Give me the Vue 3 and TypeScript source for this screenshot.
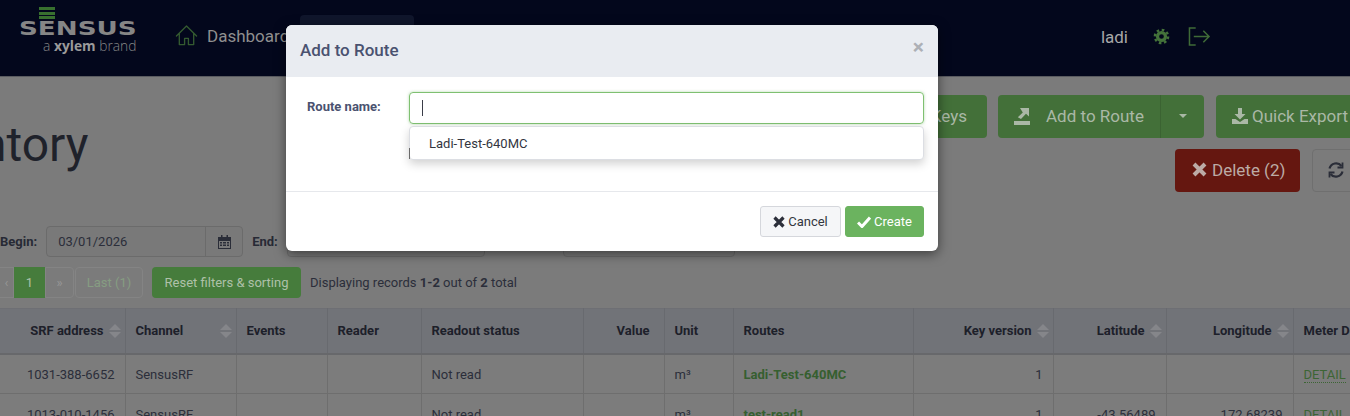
<script setup lang="ts">
interface Col { label: string; width: number; align?: 'right'; sort?: boolean }
const cols: Col[] = [
  { label: 'SRF address', width: 125, align: 'right', sort: true },
  { label: 'Channel', width: 111, sort: true },
  { label: 'Events', width: 91 },
  { label: 'Reader', width: 94 },
  { label: 'Readout status', width: 162 },
  { label: 'Value', width: 81, align: 'right' },
  { label: 'Unit', width: 69 },
  { label: 'Routes', width: 180 },
  { label: 'Key version', width: 140, align: 'right', sort: true },
  { label: 'Latitude', width: 113, align: 'right', sort: true },
  { label: 'Longitude', width: 127, align: 'right', sort: true },
  { label: 'Meter Details', width: 107 },
]
const rows = [
  ['1031-388-6652', 'SensusRF', '', '', 'Not read', '', 'm³', 'Ladi-Test-640MC', '1', '', '', 'DETAIL'],
  ['1013-010-1456', 'SensusRF', '', '', 'Not read', '', 'm³', 'test-read1', '1', '-43.56489', '172.68239', 'DETAIL'],
]
const nav = ['Dashboard', 'Inventory', 'Routes', 'Reports']
</script>

<template>
  <div class="page">
    <header class="topbar">
      <div class="logo">
        <span class="stripes"><i></i><i></i><i></i></span>
        <span class="wordmark">SENSUS</span>
        <span class="tag">a <b>xylem</b> brand</span>
      </div>
      <nav class="nav">
        <a v-for="(n, i) in nav" :key="n" class="nav-item" :class="{ active: i === 1 }">
          <svg width="23" height="23" viewBox="0 0 24 24" fill="none" stroke="#345a30" stroke-width="1.4" stroke-linejoin="round" stroke-linecap="round">
            <path d="M1.5 12.5 12 2l10.500 10.500M4.500 10v11.500h5.500v-6.500h4v6.500h5.500V10" />
          </svg>
          <span>{{ n }}</span>
        </a>
      </nav>
      <div class="user">
        <span class="uname">ladi</span>
        <svg class="gear" width="17" height="17" viewBox="0 0 18 18" fill="none" stroke="#44723a">
          <circle cx="9" cy="9" r="4.200" stroke-width="3.400" />
          <circle cx="9" cy="9" r="7" stroke-width="2.600" stroke-dasharray="2.750 2.750" />
        </svg>
        <svg class="logout" width="23" height="21" viewBox="0 0 24 22" fill="none" stroke="#3f6b37" stroke-width="1.600">
          <path d="M8 2H1.500v18H8M6 11h16M16 5l6 6-6 6" />
        </svg>
      </div>
    </header>

    <main class="content">
      <div class="head-row">
        <h1 class="title">Inventory</h1>
        <div class="actions">
          <div class="action-row">
            <button class="btn big green keys">Keys</button>
            <div class="split">
              <button class="btn big green main">
                <svg width="16" height="18" viewBox="0 0 16 18" fill="#aab8a6">
                  <path d="M0 14h16v4H0zM6 1h9v8.500l-3-2.800-5 5.300-3.200-1.700 5-4.800z" />
                </svg>
                <span>Add to Route</span>
              </button>
              <button class="btn big green caret"><i></i></button>
            </div>
            <button class="btn big green quick">
              <svg width="16" height="16" viewBox="0 0 16 16" fill="#aab8a6">
                <path d="M6 0h4v6h3.500L8 11.500 2.500 6H6zM0 11h3.500L8 14l4.500-3H16v5H0z" />
              </svg>
              <span>Quick Export</span>
            </button>
          </div>
          <div class="action-row">
            <button class="btn big red">
              <svg width="15" height="15" viewBox="0 0 15 15" fill="none" stroke="#bcaba6" stroke-width="4">
                <path d="M2 2l11 11M13 2 2 13" />
              </svg>
              <span>Delete (2)</span>
            </button>
            <button class="btn big ghost">
              <svg width="18" height="18" viewBox="0 0 18 18" fill="none" stroke="#2a2d38" stroke-width="2.200">
                <path d="M2.500 7.500A6.800 6.800 0 0 1 14.500 5M15.500 10.500A6.800 6.800 0 0 1 3.500 13" />
                <path d="M15.500 1.500v5h-5M2.500 16.500v-5h5" stroke-width="1.800" />
              </svg>
            </button>
          </div>
        </div>
      </div>

      <div class="filters">
        <label>Begin:</label>
        <div class="date w197">
          <span class="val">03/01/2026</span>
          <span class="addon">
            <svg width="13" height="14" viewBox="0 0 13 14" fill="#2a2d38">
              <path d="M0 2h3V0h1.500v2h4V0H10v2h3v12H0zm1 4v7h11V6z" />
              <path d="M2 7h2v1.500H2zM5 7h3v1.500H5zM9 7h2v1.500H9zM2 9.500h2V11H2zM5 9.500h3V11H5zM9 9.500h2V11H9z" />
            </svg>
          </span>
        </div>
        <label class="end">End:</label>
        <div class="date w198"></div>
        <div class="date w172"></div>
      </div>

      <div class="pager-row">
        <ul class="pager">
          <li class="prev">‹</li>
          <li class="on">1</li>
          <li class="next">»</li>
          <li class="last">Last (1)</li>
        </ul>
        <button class="btn reset">Reset filters &amp; sorting</button>
        <span class="count">Displaying records <b>1-2</b> out of <b>2</b> total</span>
      </div>

      <table class="grid">
        <colgroup>
          <col v-for="c in cols" :key="c.label" :style="{ width: c.width + 'px' }" />
        </colgroup>
        <thead>
          <tr>
            <th v-for="c in cols" :key="c.label">
              <div class="th" :class="{ right: c.align === 'right', plain: c.align === 'right' && !c.sort }">
                <span>{{ c.label }}</span>
                <span v-if="c.sort" class="sort"><i></i><i></i></span>
              </div>
            </th>
          </tr>
        </thead>
        <tbody>
          <tr v-for="r in rows" :key="r[0]">
            <td v-for="(v, i) in r" :key="i" :class="{ right: cols[i].align === 'right', route: i === 7 }">
              <span v-if="i === 11" class="detail">{{ v }}</span>
              <template v-else>{{ v }}</template>
            </td>
          </tr>
        </tbody>
      </table>
    </main>

    <div class="modal">
      <div class="m-head">
        <h2>Add to Route</h2>
        <span class="close">×</span>
      </div>
      <div class="m-body">
        <label>Route name:</label>
        <div class="combo">
          <div class="input"><span class="cursor"></span></div>
          <div class="menu">Ladi-Test-640MC</div>
          <div class="hidden-row"></div>
        </div>
      </div>
      <div class="m-foot">
        <button class="mbtn cancel">
          <svg width="12" height="12" viewBox="0 0 12 12" fill="none" stroke="#2c2f3a" stroke-width="3.200">
            <path d="M1.500 1.500l9 9M10.500 1.500l-9 9" />
          </svg>
          Cancel
        </button>
        <button class="mbtn create">
          <svg width="14" height="12" viewBox="0 0 14 12" fill="none" stroke="#fff" stroke-width="3">
            <path d="M1 6.500 5 10.500 13 1.500" />
          </svg>
          Create
        </button>
      </div>
    </div>
  </div>
</template>

<style scoped>
.page {
  position: relative;
  width: 1350px;
  height: 416px;
  overflow: hidden;
  background: #7b7b7b;
  font-family: Roboto, "Liberation Sans", sans-serif;
  font-size: 13px;
  color: #2b2e3a;
}
.topbar {
  display: flex;
  align-items: center;
  height: 76px;
  background: #03071c;
  border-bottom: 1px solid #5a5b60;
  box-sizing: content-box;
}
.logo {
  position: relative;
  width: 175px;
  height: 76px;
  flex: none;
  color: #868686;
}
.stripes {
  position: absolute;
  left: 39px;
  top: 7px;
  display: flex;
  flex-direction: column;
  gap: 1.500px;
  width: 16px;
}
.stripes i {
  height: 3px;
  background: #38702f;
}
.wordmark {
  position: absolute;
  left: 19px;
  top: 15px;
  font-family: "DejaVu Sans", sans-serif;
  font-weight: 700;
  font-size: 20px;
  line-height: 26px;
  transform-origin: left center;
  transform: scaleX(1.31);
}
.tag {
  position: absolute;
  left: 43px;
  top: 37px;
  font-family: "Open Sans", sans-serif;
  font-size: 13.800px;
  font-weight: 300;
  line-height: 18px;
  white-space: nowrap;
}
.tag b {
  color: #9a9a9a;
  font-weight: 700;
}
.nav {
  display: flex;
  align-items: center;
  gap: 9px;
  height: 76px;
  padding-bottom: 5px;
  box-sizing: border-box;
  white-space: nowrap;
}
.nav-item {
  display: flex;
  align-items: center;
  gap: 9px;
  height: 42px;
  font-size: 17px;
  color: #8f8f8f;
}
.nav-item:first-child {
  margin-right: 2px;
}
.nav-item:nth-child(3) {
  margin-right: 12px;
}
.nav-item.active {
  background: #10162c;
  border-radius: 4px;
  padding: 0 6px;
}
.user {
  margin-left: auto;
  display: flex;
  align-items: center;
  padding: 0 139px 3px 0;
}
.uname {
  font-size: 17px;
  color: #a8a8a8;
  margin-right: 25px;
}
.gear {
  margin-right: 18px;
}
.head-row {
  display: flex;
  justify-content: space-between;
  padding-top: 18px;
  height: 97px;
  box-sizing: content-box;
}
.title {
  margin: 26px 0 0 -108px;
  font-size: 48px;
  font-weight: 400;
  line-height: 48px;
  color: #1f222b;
}
.actions {
  display: flex;
  flex-direction: column;
  gap: 11px;
  margin-right: -10px;
}
.action-row {
  display: flex;
  justify-content: flex-end;
  gap: 12px;
}
.btn {
  font-family: inherit;
  border: 0;
  padding: 0;
  display: flex;
  align-items: center;
}
.big {
  height: 43px;
  font-size: 17px;
  border-radius: 4px;
  padding-bottom: 2px;
}
.green {
  background: #437039;
  color: #aab8a6;
}
.keys {
  width: 207px;
  justify-content: flex-end;
  padding-right: 20px;
  margin-right: -1px;
}
.split {
  display: flex;
}
.main {
  width: 163px;
  gap: 16px;
  padding-left: 16px;
  border-radius: 4px 0 0 4px;
  border-right: 1px solid #3b6332;
}
.caret {
  width: 43px;
  justify-content: center;
  border-radius: 0 4px 4px 0;
}
.caret i {
  border: 4px solid transparent;
  border-top-color: #aab8a6;
  border-bottom: 0;
}
.quick {
  width: 144px;
  gap: 4px;
  padding-left: 16px;
}
.red {
  width: 125px;
  gap: 5px;
  padding-left: 17px;
  background: #651710;
  color: #bcaba6;
}
.ghost {
  width: 48px;
  justify-content: center;
  background: #7b7b7b;
  border: 1px solid #6f6f6f;
  box-sizing: border-box;
}
.filters {
  display: flex;
  align-items: center;
  height: 31px;
  margin-top: 34px;
}
.filters label {
  font-weight: 700;
  color: #272a35;
}
.date {
  box-sizing: border-box;
  height: 31px;
  display: flex;
  align-items: center;
  border: 1px solid #6b6b6b;
  border-radius: 4px;
  background: #797979;
}
.w197 {
  width: 197px;
  margin-left: 9px;
}
.w198 {
  width: 198px;
  margin-left: 9px;
}
.w172 {
  width: 172px;
  margin-left: 78px;
}
.val {
  flex: 1;
  padding-left: 11px;
  color: #2b2e3a;
}
.addon {
  width: 36px;
  height: 100%;
  display: flex;
  align-items: center;
  justify-content: center;
  border-left: 1px solid #6b6b6b;
}
.end {
  margin-left: 9px;
}
.pager-row {
  display: flex;
  align-items: center;
  height: 31px;
  margin-top: 10px;
}
.pager {
  display: flex;
  list-style: none;
  margin: 0;
  padding: 0;
  height: 31px;
  line-height: 29px;
  color: #869d82;
}
.pager li {
  box-sizing: border-box;
  border: 1px solid #848484;
  text-align: center;
}
.prev {
  width: 14px;
  border-left: 0 !important;
  color: #969696;
}
.pager .on {
  width: 31px;
  background: #467c3c;
  border-color: #467c3c;
  color: #aec1a9;
}
.next {
  width: 29px;
  border-radius: 0 4px 4px 0;
  color: #969696;
}
.last {
  width: 68px;
  margin-left: 1px;
  border-radius: 4px;
}
.reset {
  width: 149px;
  height: 31px;
  margin-left: 9px;
  justify-content: center;
  border-radius: 4px;
  background: #467c3c;
  color: #aec1a9;
  font-size: 13px;
}
.count {
  margin-left: 9px;
  color: #2b2e3a;
}
.count b {
  font-weight: 700;
}
.grid {
  table-layout: fixed;
  width: 1400px;
  margin-top: 10px;
  border-collapse: collapse;
}
th {
  height: 45px;
  padding: 0 4px 0 10px;
  box-sizing: border-box;
  background: #717378;
  border-right: 1px solid #686a6f;
  border-top: 1px solid #6e6f74;
  border-bottom: 2px solid #67686b;
  font-weight: 700;
  color: #1d202a;
  text-align: left;
  white-space: nowrap;
}
.th {
  display: flex;
  align-items: center;
  justify-content: space-between;
  gap: 5px;
}
.th.right {
  justify-content: flex-end;
}
.th.plain {
  padding-right: 10px;
}
.sort {
  display: flex;
  flex-direction: column;
  gap: 2px;
  flex: none;
}
.sort i {
  border-left: 6px solid transparent;
  border-right: 6px solid transparent;
  border-bottom: 6px solid #85868a;
}
.sort i + i {
  border-bottom: 0;
  border-top: 6px solid #85868a;
}
td {
  height: 40px;
  padding: 2px 10px 0;
  box-sizing: border-box;
  border-right: 1px solid #6e6e6e;
  border-bottom: 1px solid #6e6e6e;
  color: #2b2e3a;
  white-space: nowrap;
  background: #7c7c7c;
}
.right {
  text-align: right;
}
.route {
  font-weight: 700;
  color: #365f30;
}
.detail {
  color: #3c6534;
  border-bottom: 1px dotted #3c6534;
}
.modal {
  position: absolute;
  left: 286px;
  top: 25px;
  width: 652px;
  height: 226px;
  background: #fff;
  border-radius: 6px;
  box-shadow: 0 3px 12px rgba(0, 0, 0, 0.5);
  display: flex;
  flex-direction: column;
  overflow: hidden;
}
.m-head {
  height: 52px;
  flex: none;
  background: #e9ecf1;
  display: flex;
  align-items: center;
  justify-content: space-between;
  padding: 0 14px;
}
.m-head h2 {
  margin: 0 0 2px;
  font-size: 17px;
  font-weight: 500;
  color: #4a5270;
}
.close {
  font-size: 21px;
  font-weight: 700;
  color: #adb0b6;
  margin-top: -8px;
}
.m-body {
  height: 115px;
  flex: none;
  display: flex;
  padding: 15px 14px 0 21px;
  box-sizing: border-box;
  border-bottom: 1px solid #e6e8ec;
}
.m-body label {
  width: 102px;
  flex: none;
  font-weight: 700;
  font-size: 13px;
  color: #4a5270;
  line-height: 30px;
}
.combo {
  position: relative;
  flex: 1;
}
.input {
  box-sizing: border-box;
  height: 32px;
  border: 1px solid #7fc071;
  border-radius: 4px;
  box-shadow: 0 0 3px rgba(106, 182, 93, 0.5);
  display: flex;
  align-items: center;
  padding-left: 12px;
}
.cursor {
  width: 1px;
  height: 16px;
  background: #3a3d48;
}
.hidden-row {
  position: absolute;
  left: 0;
  top: 56px;
  width: 1px;
  height: 11px;
  background: #6a6a6a;
}
.menu {
  position: absolute;
  left: 0;
  right: 0;
  top: 34px;
  height: 34px;
  box-sizing: border-box;
  padding-left: 19px;
  line-height: 33px;
  background: #fff;
  border: 1px solid #dcdee3;
  border-radius: 4px;
  box-shadow: 0 4px 10px rgba(0, 0, 0, 0.18);
  font-size: 13px;
  color: #33363f;
}
.m-foot {
  flex: 1;
  display: flex;
  justify-content: flex-end;
  align-items: flex-start;
  gap: 4px;
  padding: 14px 14px 0 0;
}
.mbtn {
  font-family: inherit;
  height: 31px;
  font-size: 13px;
  border-radius: 3px;
  display: flex;
  align-items: center;
  justify-content: center;
  gap: 3px;
  padding: 0;
  box-sizing: border-box;
}
.cancel {
  width: 81px;
  background: #f5f6f8;
  border: 1px solid #d5d7dc;
  color: #33363f;
}
.create {
  width: 79px;
  background: #6bb35f;
  border: 1px solid #6bb35f;
  color: #fff;
}
</style>

<style>
html, body {
  margin: 0;
  background: #7b7b7b;
}
</style>
